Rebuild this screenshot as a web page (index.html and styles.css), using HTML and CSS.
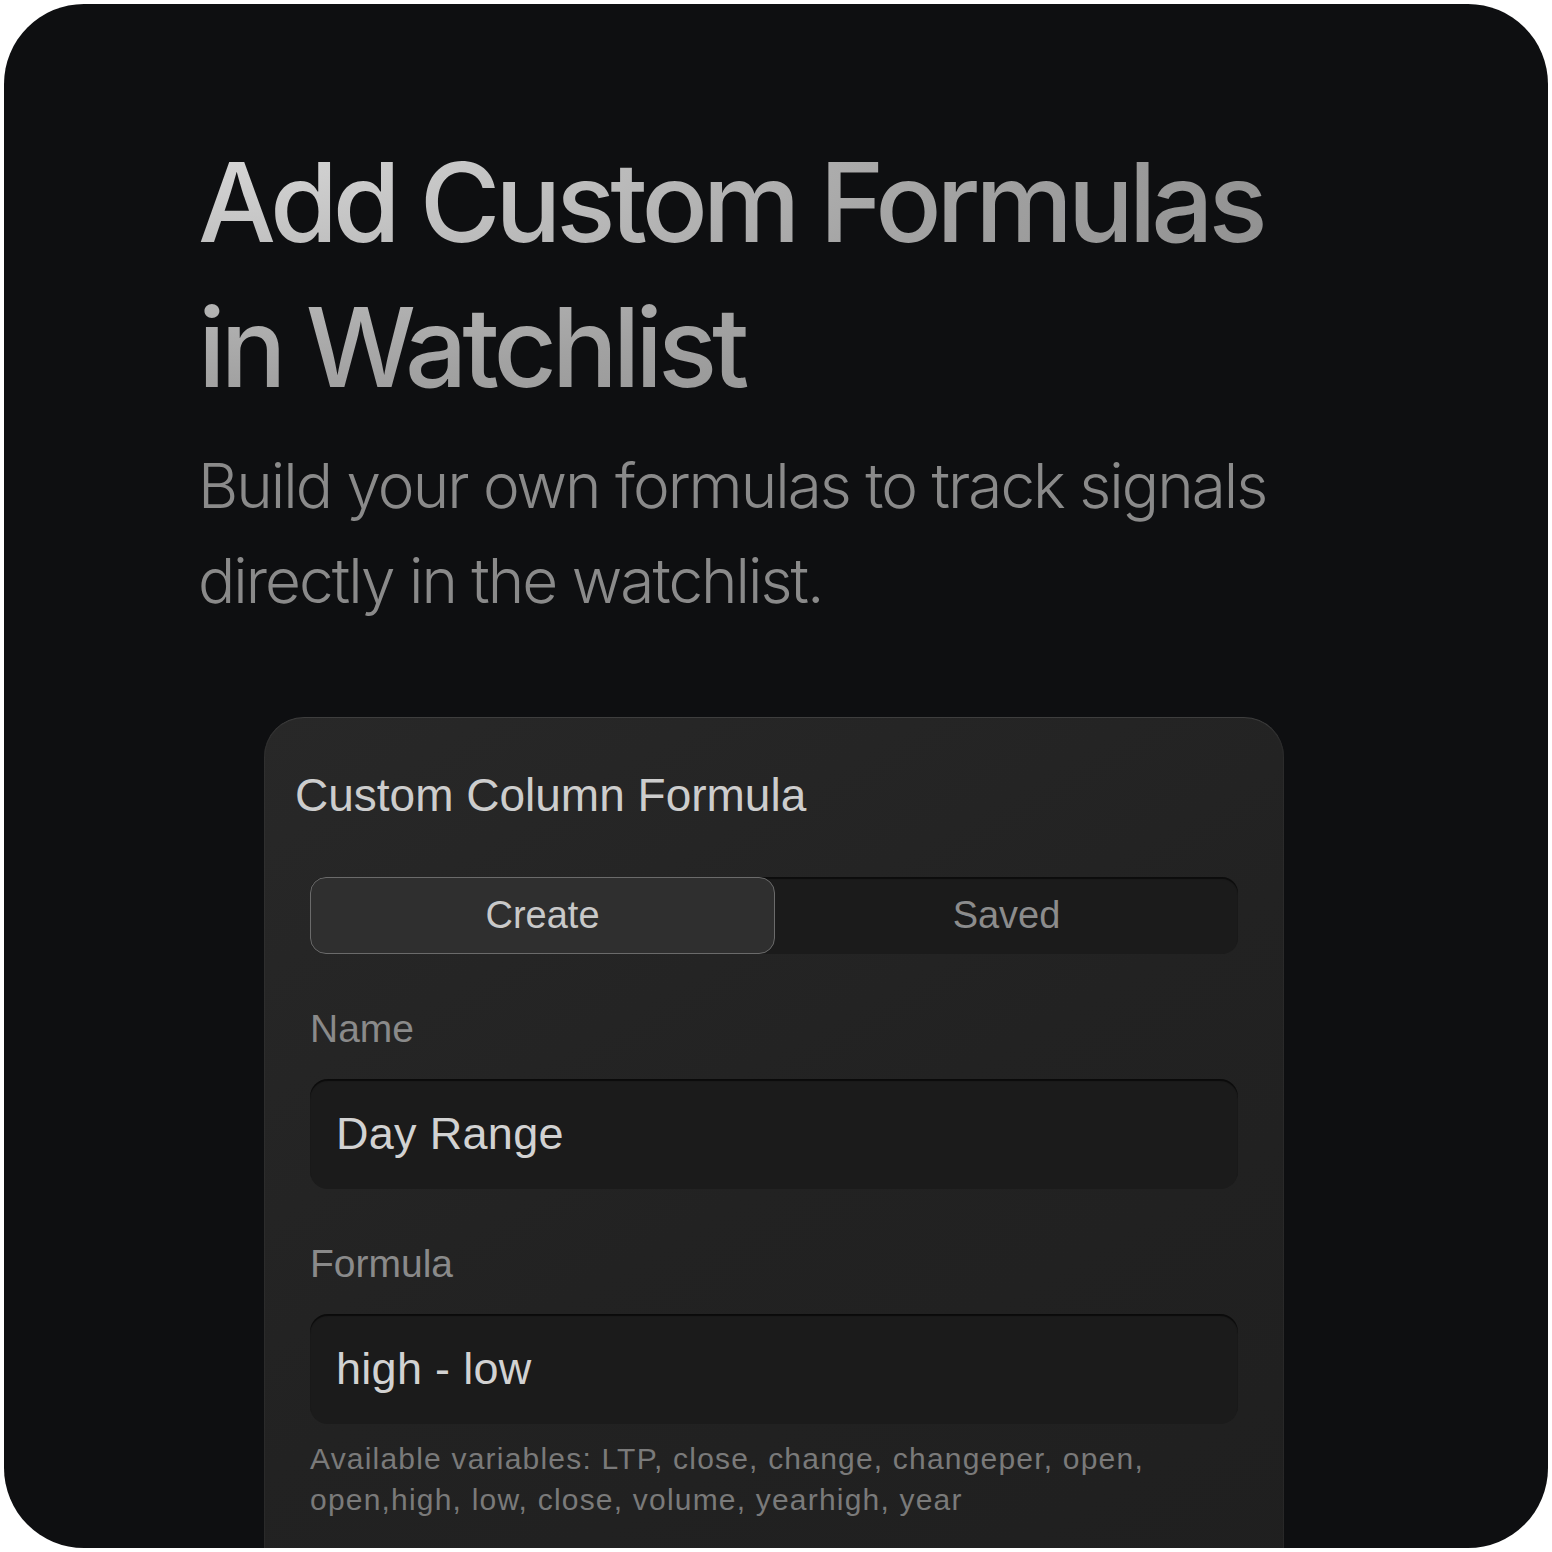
FILE: index.html
```html
<!DOCTYPE html>
<html lang="en">
<head>
<meta charset="UTF-8" />
<meta name="viewport" content="width=device-width, initial-scale=1" />
<title>Add Custom Formulas in Watchlist</title>
<link rel="stylesheet" href="styles.css">
</head>
<body>

<div class="card">
  <h1 class="headline">Add Custom Formulas in Watchlist</h1>
  <p class="lead">Build your own formulas to track signals directly in the watchlist.</p>

  <div class="panel">
    <h2 class="panel-title">Custom Column Formula</h2>

    <div class="panel-body">
      <div class="tabs">
        <div class="tab active">Create</div>
        <div class="tab">Saved</div>
      </div>

      <div class="field">
        <label>Name</label>
        <div class="input">Day Range</div>
      </div>

      <div class="field">
        <label>Formula</label>
        <div class="input">high - low</div>
        <p class="hint">Available variables: LTP, close, change, changeper, open, open,high, low, close, volume, yearhigh, year</p>
      </div>
    </div>
  </div>
</div>

</body>
</html>
```

FILE: styles.css
```css
body {
  margin: 0;
  background: #fff;
}
.card {
  margin: 4px;
  width: 1544px;
  height: 1544px;
  box-sizing: border-box;
  padding: 126px 194px 0;
  border-radius: 80px;
  background: #0e0f11;
  overflow: hidden;
  font-family: Inter, "Noto Sans", sans-serif;
}
.headline {
  margin: 0;
  width: 1120px;
  font-size: 110px;
  font-weight: 500;
  line-height: 145px;
  letter-spacing: -0.047em;
  background: radial-gradient(ellipse 1300px 420px at 0 0, #dcdcdc 0%, #a2a2a2 60%, #898989 100%);
  -webkit-background-clip: text;
  background-clip: text;
  color: transparent;
}
.lead {
  margin: 18px 0 0;
  width: 1100px;
  font-size: 62px;
  font-weight: 300;
  line-height: 95px;
  letter-spacing: -0.032em;
  color: #8a8a8a;
}
.panel {
  margin: 89px 0 0 66px;
  width: 1020px;
  box-sizing: border-box;
  padding: 50px 0 120px;
  border-radius: 40px;
  border-top: 1px solid #3e3e3e;
  background: linear-gradient(150deg, #282828 0%, #222 50%, #1f1f1f 100%);
  box-shadow: inset 1px 0 0 rgba(255,255,255,0.04), inset -1px 0 0 rgba(255,255,255,0.04);
  font-family: "Liberation Sans", Arial, sans-serif;
}
.panel-title {
  margin: 0;
  padding: 0 31px;
  font-size: 46px;
  font-weight: 400;
  color: #cdcdcd;
}
.panel-body {
  padding: 0 46px;
}
.tabs {
  display: flex;
  margin-top: 55px;
  height: 77px;
  border-radius: 16px;
  background: #1b1b1b;
  box-shadow: inset 0 2px 1px rgba(0,0,0,0.55);
}
.tab {
  flex: 1;
  display: flex;
  align-items: center;
  justify-content: center;
  font-size: 38px;
  color: #8c8c8c;
}
.tab.active {
  border: 1px solid #6b6b6b;
  border-radius: 16px;
  background: #2f2f2f;
  color: #c9c9c9;
}
.field {
  margin-top: 53px;
}
.field label {
  display: block;
  margin-bottom: 28px;
  font-size: 39px;
  color: #8a8a8a;
}
.input {
  display: flex;
  align-items: center;
  height: 110px;
  padding: 0 26px;
  border-radius: 18px;
  background: #1b1b1b;
  box-shadow: inset 0 2px 1px rgba(0,0,0,0.6);
  font-size: 45px;
  letter-spacing: 0.3px;
  color: #d2d2d2;
}
.hint {
  margin: 14px 0 0;
  font-size: 30px;
  line-height: 41px;
  letter-spacing: 1.2px;
  color: #7a7a7a;
}
```
